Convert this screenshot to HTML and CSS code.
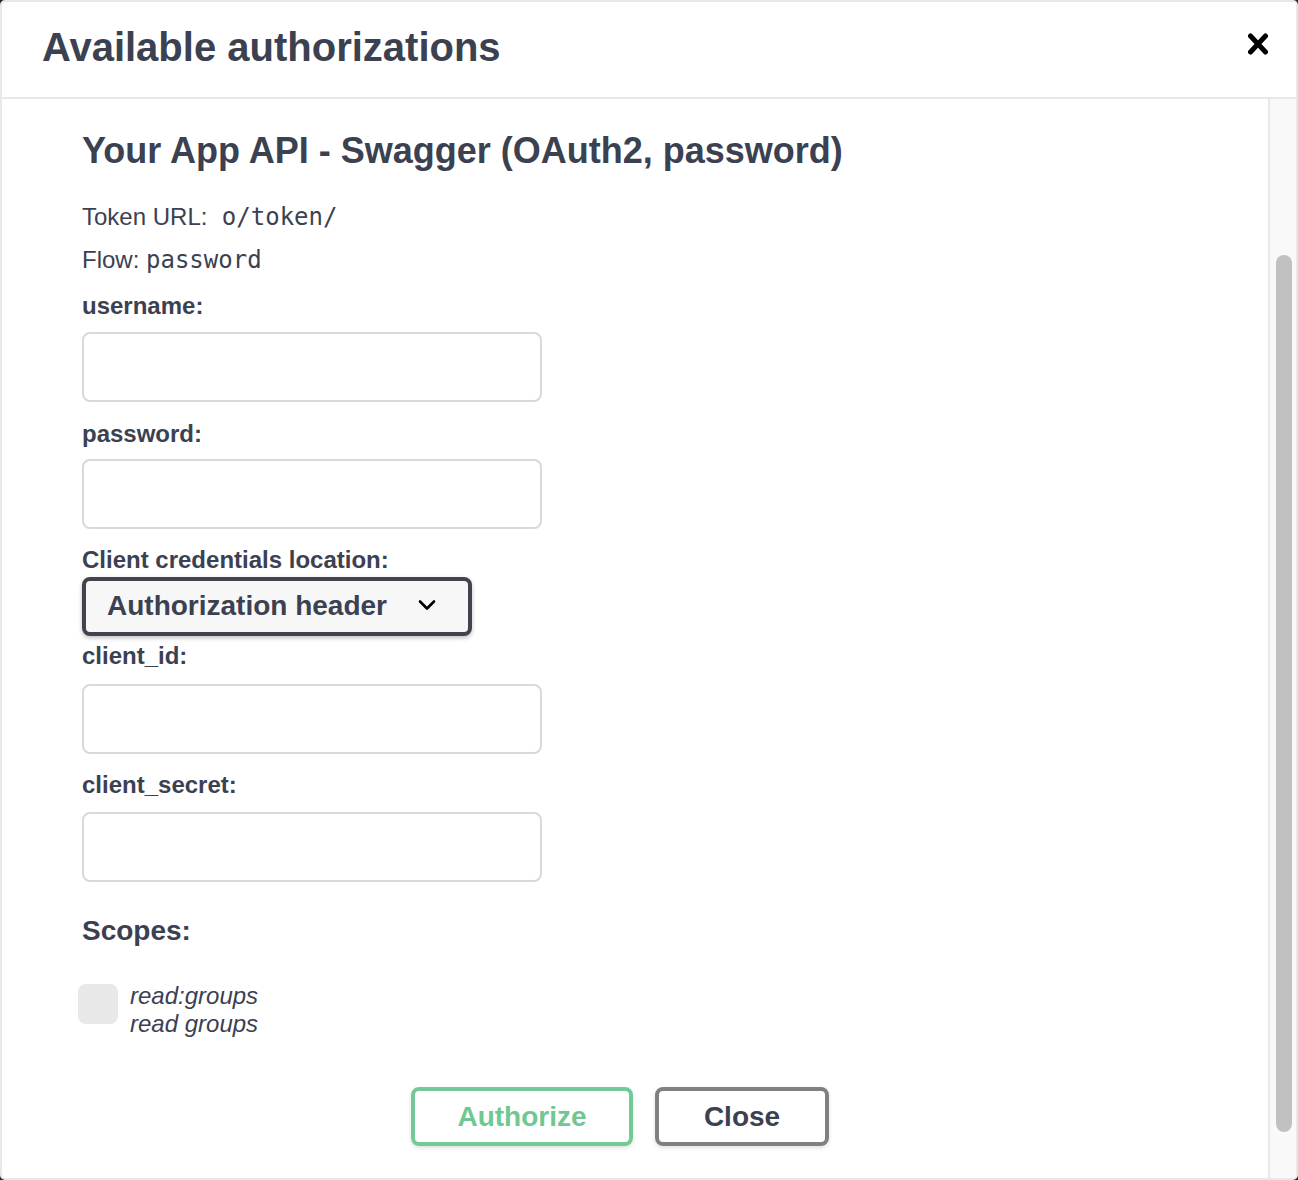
FILE: index.html
```html
<!DOCTYPE html>
<html lang="en">
<head>
<meta charset="utf-8">
<title>Available authorizations</title>
<link rel="stylesheet" href="styles.css">
</head>
<body>
<div class="modal">
  <div class="modal-header">
    <h3 class="modal-title">Available authorizations</h3>
    <button class="close-modal" aria-label="Close">
      <svg width="20" height="22" viewBox="0 0 20 22"><path d="M2.5 3 L17.5 19 M17.5 3 L2.5 19" stroke="#000" stroke-width="5" stroke-linecap="round"/></svg>
    </button>
  </div>
  <div class="modal-body">
    <div class="modal-content">
      <h4 class="auth-title">Your App API - Swagger (OAuth2, password)</h4>
      <p class="info first">Token URL:<code> o/token/</code></p>
      <p class="info">Flow: <code>password</code></p>

      <label class="field-label l-user">username:</label>
      <input class="text-input i-user" type="text">

      <label class="field-label l-pass">password:</label>
      <input class="text-input i-pass" type="text">

      <label class="field-label l-loc">Client credentials location:</label>
      <div class="select">
        <span>Authorization header</span>
        <svg class="chevron" width="18" height="12" viewBox="0 0 18 12"><path d="M2 2.5 L9 9.5 L16 2.5" fill="none" stroke="#000" stroke-width="2.6" stroke-linecap="round" stroke-linejoin="round"/></svg>
      </div>

      <label class="field-label l-cid">client_id:</label>
      <input class="text-input i-cid" type="text">

      <label class="field-label l-sec">client_secret:</label>
      <input class="text-input i-sec" type="text">

      <h2 class="scopes-title">Scopes:</h2>
      <div class="scope-row">
        <span class="checkbox"></span>
        <div class="scope-text">
          <div>read:groups</div>
          <div>read groups</div>
        </div>
      </div>

      <div class="btn-wrapper">
        <button class="btn btn-authorize">Authorize</button>
        <button class="btn btn-close">Close</button>
      </div>
    </div>
    <div class="scrollbar">
      <div class="thumb"></div>
    </div>
  </div>
</div>
</body>
</html>
```
FILE: styles.css
```css
html, body {
  margin: 0;
  padding: 0;
}
body {
  background: #1f2321;
  font-family: "Liberation Sans", Arial, sans-serif;
  color: #3b4151;
}
.modal {
  width: 1298px;
  height: 1180px;
  box-sizing: border-box;
  border: 2px solid #e8e8e8;
  border-radius: 5px;
  background: #fff;
  display: flex;
  flex-direction: column;
  overflow: hidden;
}
.modal-header {
  display: flex;
  align-items: center;
  padding: 21px 28px 26px 40px;
  border-bottom: 2px solid #e8e8e8;
  flex: 0 0 auto;
}
.modal-title {
  flex: 1;
  margin: 0;
  font-size: 40px;
  line-height: 48px;
  font-weight: 700;
  color: #3b4151;
}
.close-modal {
  border: 0;
  background: none;
  padding: 0;
  display: flex;
  margin-top: -6px;
}
.modal-body {
  flex: 1;
  display: flex;
  min-height: 0;
}
.modal-content {
  flex: 1;
  padding: 30px 0 0 80px;
  display: flex;
  flex-direction: column;
  align-items: flex-start;
  overflow: hidden;
}
.auth-title {
  margin: 0;
  font-size: 36px;
  line-height: 44px;
  font-weight: 700;
  color: #3b4151;
}
.info {
  margin: 9px 0 0;
  font-size: 24px;
  line-height: 34px;
  color: #3b4151;
}
.info.first {
  margin-top: 27px;
}
.info code {
  font-family: "DejaVu Sans Mono", "Liberation Mono", monospace;
  font-size: 24px;
}
.field-label {
  display: block;
  font-size: 24px;
  line-height: 30px;
  font-weight: 700;
  color: #3b4151;
  margin-top: 16px;
}
.l-user { margin-top: 14px; }
.l-pass { margin-top: 17px; }
.l-loc { margin-top: 16px; }
.l-cid { margin-top: 5px; }
.l-sec { margin-top: 16px; }
.text-input {
  box-sizing: border-box;
  width: 460px;
  height: 70px;
  margin: 12px 0 0;
  border: 2px solid #d9d9d9;
  border-radius: 8px;
  background: #fff;
  padding: 16px 20px;
  font-size: 24px;
}
.i-user { margin-top: 11px; }
.i-pass { margin-top: 10px; }
.i-cid { margin-top: 13px; }
.i-sec { margin-top: 12px; }
.select {
  box-sizing: border-box;
  margin-top: 2px;
  width: 390px;
  height: 59px;
  border: 4px solid #41444e;
  border-radius: 8px;
  background: #f7f7f7;
  box-shadow: 0 2px 4px rgba(0, 0, 0, 0.25);
  display: flex;
  align-items: center;
  padding: 0 32px 0 21px;
  font-size: 28px;
  font-weight: 700;
  color: #3b4151;
}
.select span {
  flex: 1;
  line-height: 51px;
  margin-top: -2px;
}
.chevron {
  margin-top: -3px;
}
.scopes-title {
  margin: 32px 0 0;
  font-size: 28px;
  line-height: 34px;
  font-weight: 700;
  color: #3b4151;
}
.scope-row {
  display: flex;
  align-items: flex-start;
  margin-top: 34px;
  margin-left: -4px;
}
.checkbox {
  width: 40px;
  height: 40px;
  border-radius: 8px;
  background: #e8e8e8;
  margin-top: 2px;
  margin-right: 12px;
  flex: 0 0 auto;
}
.scope-text {
  font-size: 24px;
  line-height: 28px;
  font-style: italic;
  color: #3b4151;
}
.btn-wrapper {
  align-self: stretch;
  display: flex;
  justify-content: center;
  gap: 22px;
  margin-top: 49px;
  padding-right: 110px;
}
.btn {
  box-sizing: border-box;
  height: 59px;
  border: 4px solid;
  border-radius: 8px;
  background: transparent;
  font-family: "Liberation Sans", Arial, sans-serif;
  font-size: 28px;
  font-weight: 700;
  line-height: 51px;
  padding: 0;
  box-shadow: 0 2px 4px rgba(0, 0, 0, 0.12);
}
.btn-authorize {
  width: 222px;
  border-color: #74ca96;
  color: #6fc892;
}
.btn-close {
  width: 174px;
  border-color: #808080;
  color: #3b4151;
}
.scrollbar {
  flex: 0 0 auto;
  width: 16px;
  border-left: 2px solid #e8e8e8;
  background: #f9f9f9;
  padding: 156px 4px 0 6px;
}
.thumb {
  width: 16px;
  height: 877px;
  border-radius: 8px;
  background: #c1c1c1;
}
```
